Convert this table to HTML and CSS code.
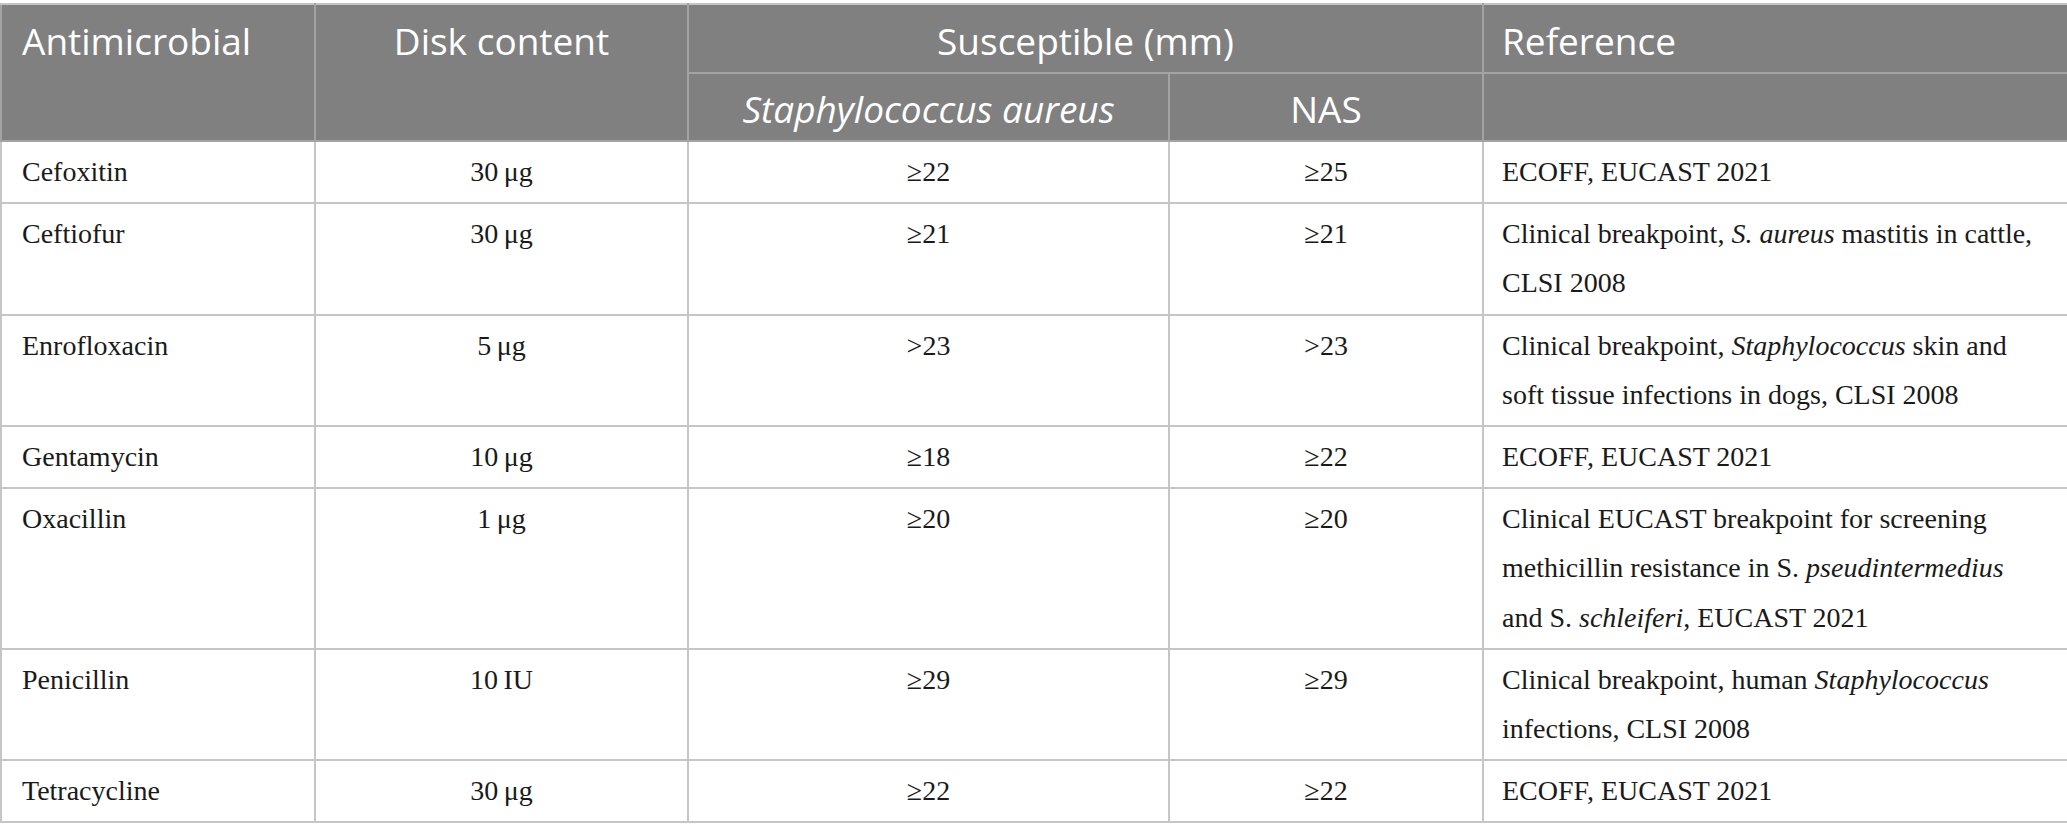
FILE: index.html
```html
<!DOCTYPE html>
<html lang="en">
<head>
<meta charset="utf-8">
<title>Antimicrobial breakpoints</title>
<link rel="stylesheet" href="styles.css">
</head>
<body>
<table class="data">
  <colgroup>
    <col class="c1"><col class="c2"><col class="c3"><col class="c4"><col class="c5">
  </colgroup>
  <thead>
    <tr class="h1">
      <th rowspan="2" class="left">Antimicrobial</th>
      <th rowspan="2">Disk content</th>
      <th colspan="2">Susceptible (mm)</th>
      <th class="left">Reference</th>
    </tr>
    <tr class="h2">
      <th><i>Staphylococcus aureus</i></th>
      <th>NAS</th>
      <th></th>
    </tr>
  </thead>
  <tbody>
    <tr>
      <td>Cefoxitin</td><td class="ctr">30&#8201;μg</td><td class="ctr">≥22</td><td class="ctr">≥25</td>
      <td>ECOFF, EUCAST 2021</td>
    </tr>
    <tr>
      <td>Ceftiofur</td><td class="ctr">30&#8201;μg</td><td class="ctr">≥21</td><td class="ctr">≥21</td>
      <td>Clinical breakpoint, <i>S. aureus</i> mastitis in cattle,<br>CLSI 2008</td>
    </tr>
    <tr>
      <td>Enrofloxacin</td><td class="ctr">5&#8201;μg</td><td class="ctr">&gt;23</td><td class="ctr">&gt;23</td>
      <td>Clinical breakpoint, <i>Staphylococcus</i> skin and<br>soft tissue infections in dogs, CLSI 2008</td>
    </tr>
    <tr>
      <td>Gentamycin</td><td class="ctr">10&#8201;μg</td><td class="ctr">≥18</td><td class="ctr">≥22</td>
      <td>ECOFF, EUCAST 2021</td>
    </tr>
    <tr>
      <td>Oxacillin</td><td class="ctr">1&#8201;μg</td><td class="ctr">≥20</td><td class="ctr">≥20</td>
      <td>Clinical EUCAST breakpoint for screening<br>methicillin resistance in S. <i>pseudintermedius</i><br>and S. <i>schleiferi</i>, EUCAST 2021</td>
    </tr>
    <tr>
      <td>Penicillin</td><td class="ctr">10&#8201;IU</td><td class="ctr">≥29</td><td class="ctr">≥29</td>
      <td>Clinical breakpoint, human <i>Staphylococcus</i><br>infections, CLSI 2008</td>
    </tr>
    <tr>
      <td>Tetracycline</td><td class="ctr">30&#8201;μg</td><td class="ctr">≥22</td><td class="ctr">≥22</td>
      <td>ECOFF, EUCAST 2021</td>
    </tr>
  </tbody>
</table>
</body>
</html>
```

FILE: styles.css
```css
html, body {
  margin: 0;
  padding: 0;
  background: #ffffff;
}

body {
  padding-top: 3px;
}

.data {
  width: 2067px;
  border-collapse: collapse;
  table-layout: fixed;
  font-family: "Liberation Serif", "Times New Roman", serif;
  color: #1a1a1a;
}

.c1 { width: 314px; }
.c2 { width: 373px; }
.c3 { width: 481px; }
.c4 { width: 314px; }
.c5 { width: 585px; }

.data th {
  background: #808080;
  color: #ffffff;
  font-family: "Open Sans", "Noto Sans", sans-serif;
  font-weight: 400;
  font-size: 37px;
  line-height: 48px;
  text-align: center;
  vertical-align: top;
  border: 2px solid #a3a3a3;
  padding: 12px 20px 7px;
}

.data thead tr.h1 th {
  border-top-color: #c4c4c4;
}

.data .h2 th {
  padding: 11px 20px 7px;
}

.data th.left {
  text-align: left;
}

.data thead tr.h1 th:first-child {
  padding-left: 20px;
}

.data thead tr.h1 th:last-child {
  padding-left: 18px;
}

.data td {
  font-size: 28px;
  line-height: 49.2px;
  vertical-align: top;
  text-align: left;
  border: 2px solid #c6c6c6;
  padding: 5px 18px 6px 20px;
}

.data td:last-child {
  padding-left: 18px;
}

.data td.ctr {
  text-align: center;
  padding-left: 10px;
  padding-right: 10px;
}
```
